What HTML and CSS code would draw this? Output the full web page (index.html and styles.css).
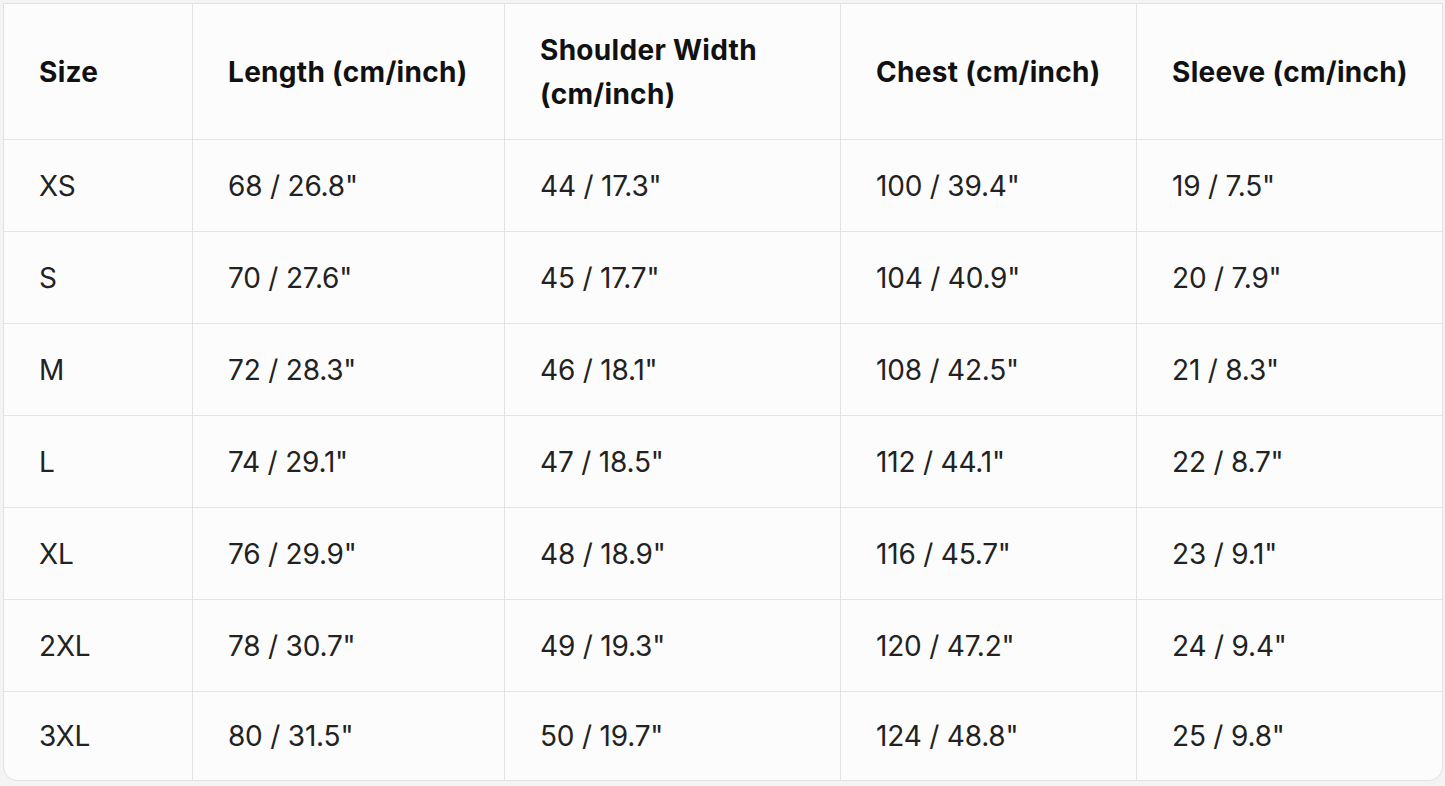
FILE: index.html
```html
<!DOCTYPE html>
<html>
<head>
<meta charset="utf-8">
<link rel="stylesheet" href="styles.css">
</head>
<body>
<div class="wrap">
<table class="size-table">
<colgroup>
<col class="c1"><col class="c2"><col class="c3"><col class="c4"><col class="c5">
</colgroup>
<thead>
<tr><th>Size</th><th>Length (cm/inch)</th><th>Shoulder Width<br>(cm/inch)</th><th>Chest (cm/inch)</th><th>Sleeve (cm/inch)</th></tr>
</thead>
<tbody>
<tr><td>XS</td><td>68 / 26.8"</td><td>44 / 17.3"</td><td>100 / 39.4"</td><td>19 / 7.5"</td></tr>
<tr><td>S</td><td>70 / 27.6"</td><td>45 / 17.7"</td><td>104 / 40.9"</td><td>20 / 7.9"</td></tr>
<tr><td>M</td><td>72 / 28.3"</td><td>46 / 18.1"</td><td>108 / 42.5"</td><td>21 / 8.3"</td></tr>
<tr><td>L</td><td>74 / 29.1"</td><td>47 / 18.5"</td><td>112 / 44.1"</td><td>22 / 8.7"</td></tr>
<tr><td>XL</td><td>76 / 29.9"</td><td>48 / 18.9"</td><td>116 / 45.7"</td><td>23 / 9.1"</td></tr>
<tr><td>2XL</td><td>78 / 30.7"</td><td>49 / 19.3"</td><td>120 / 47.2"</td><td>24 / 9.4"</td></tr>
<tr class="last"><td>3XL</td><td>80 / 31.5"</td><td>50 / 19.7"</td><td>124 / 48.8"</td><td>25 / 9.8"</td></tr>
</tbody>
</table>
</div>
</body>
</html>
```
FILE: styles.css
```css
html, body {
  margin: 0;
  padding: 0;
  background: #f4f4f4;
}
body {
  padding: 3px 0 0 3px;
  font-family: Inter, "Noto Sans", sans-serif;
}
.wrap {
  width: 1438px;
  border: 1px solid #e2e2e2;
  border-radius: 0 0 14px 14px;
  overflow: hidden;
  background: #fcfcfc;
}
.size-table {
  border-collapse: separate;
  border-spacing: 0;
  table-layout: fixed;
  width: 1438px;
}
.c1 { width: 189px; }
.c2 { width: 312px; }
.c3 { width: 336px; }
.c4 { width: 296px; }
.c5 { width: 305px; }
th, td {
  text-align: left;
  vertical-align: middle;
  padding: 0 0 0 35px;
  border-right: 1px solid #e4e4e4;
  border-bottom: 1px solid #e4e4e4;
  box-sizing: border-box;
}
th:last-child, td:last-child { border-right: none; }
th {
  height: 136px;
  font-size: 28px;
  line-height: 44px;
  font-weight: 700;
  letter-spacing: 0.3px;
  color: #111111;
}
td {
  height: 92px;
  font-size: 28px;
  font-weight: 400;
  letter-spacing: -0.2px;
  color: #222222;
}
tr.last td {
  height: 88px;
  border-bottom: none;
}
```
